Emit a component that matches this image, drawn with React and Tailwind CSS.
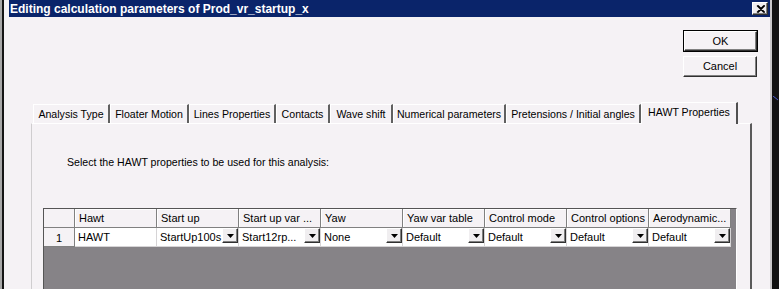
import React from "react";

const tabs = [
  { label: "Analysis Type", w: 77 },
  { label: "Floater Motion", w: 79 },
  { label: "Lines Properties", w: 87 },
  { label: "Contacts", w: 54 },
  { label: "Wave shift", w: 63 },
  { label: "Numerical parameters", w: 113 },
  { label: "Pretensions / Initial angles", w: 135 },
];

const headers = [
  "Hawt",
  "Start up",
  "Start up var ...",
  "Yaw",
  "Yaw var table",
  "Control mode",
  "Control options",
  "Aerodynamic...",
];

const values = [
  { v: "HAWT", dd: false },
  { v: "StartUp100s", dd: true },
  { v: "Start12rp...", dd: true },
  { v: "None", dd: true },
  { v: "Default", dd: true },
  { v: "Default", dd: true },
  { v: "Default", dd: true },
  { v: "Default", dd: true },
];

function DropBtn() {
  return (
    <div className="w-[16px] h-[15px] shrink-0 bg-[#f0eef0] border border-t-white border-l-white border-r-[#303030] border-b-[#303030] shadow-[inset_-1px_-1px_0_#808080] flex items-center justify-center">
      <svg width="7" height="4" viewBox="0 0 7 4">
        <polygon points="0,0 7,0 3.5,4" fill="#000" />
      </svg>
    </div>
  );
}

export default function App() {
  return (
    <div className="w-[779px] h-[289px] flex overflow-hidden bg-black text-[10.6px] leading-[13px] text-black font-['Liberation_Sans',Arial,sans-serif]">
      <div className="w-[2px] bg-[#a8a8a8]" />
      <div className="w-[2px] bg-[#141414]" />
      <div className="w-[766px] flex flex-col bg-[#f5f2f5]">
        {/* title bar */}
        <div className="pl-[5px]">
          <div className="h-[17px] bg-[#0a246a] flex items-center justify-between pl-[1px] pr-[2px]">
            <span className="text-white font-bold text-[12px] leading-[14px] whitespace-nowrap">
              Editing calculation parameters of Prod_vr_startup_x
            </span>
            <div className="w-[16px] h-[13px] bg-[#f0eef0] border border-t-white border-l-white border-r-[#303030] border-b-[#303030] shadow-[inset_-1px_-1px_0_#808080] flex items-center justify-center">
              <svg width="9" height="8" viewBox="0 0 9 8">
                <path d="M1 0.5 L8 7.5 M2 0.5 L9 7.5 M8 0.5 L1 7.5 M9 0.5 L2 7.5" stroke="#000" strokeWidth="1.2" fill="none" />
              </svg>
            </div>
          </div>
        </div>

        {/* buttons */}
        <div className="flex flex-col items-end pr-[12px] pt-[13px] gap-[4px] text-[11px]">
          <div className="w-[75px] h-[22px] border border-black">
            <div className="w-full h-full border border-t-white border-l-white border-r-[#303030] border-b-[#303030] shadow-[inset_-1px_-1px_0_#808080] flex items-center justify-center">
              OK
            </div>
          </div>
          <div className="w-[74px] h-[21px] mr-[1px] border border-t-white border-l-white border-r-[#303030] border-b-[#303030] shadow-[inset_-1px_-1px_0_#808080] flex items-center justify-center">
            Cancel
          </div>
        </div>

        {/* tabs */}
        <div className="ml-[29px] mt-[25px] h-[21px] flex items-end">
          {tabs.map((t) => (
            <div
              key={t.label}
              style={{ width: t.w }}
              className="h-[19px] shrink-0 border-l border-t border-l-white border-t-white border-r-2 border-r-[#606060] flex items-center justify-center whitespace-nowrap"
            >
              {t.label}
            </div>
          ))}
          <div className="w-[97px] h-[22px] -mb-[1px] relative z-10 shrink-0 bg-[#f5f2f5] border-l border-t border-l-white border-t-white border-r-2 border-r-[#505050] flex items-start justify-center pt-[3px] whitespace-nowrap">
            HAWT Properties
          </div>
        </div>

        {/* panel */}
        <div className="ml-[27px] w-[721px] flex-1 flex flex-col border-l border-t border-l-[#cfcdcf] border-t-white border-r-2 border-r-[#5a5a5a]">
          <div className="pl-[35px] pt-[32px] whitespace-nowrap">
            Select the HAWT properties to be used for this analysis:
          </div>
          <div className="ml-[11px] mt-[39px] w-[694px] flex-1 bg-[#868387] border-l border-t border-l-[#555] border-t-[#555] border-r border-r-white flex flex-col text-[11px]">
            {/* header row */}
            <div className="flex h-[19px]">
              <div className="w-[31px] h-full shrink-0 bg-[#f5f2f5] border-r border-b border-[#808080]" />
              {headers.map((h) => (
                <div
                  key={h}
                  className="w-[82px] h-full shrink-0 bg-[#f5f2f5] border-r border-b border-[#808080] shadow-[inset_1px_1px_0_#fff] pl-[4px] flex items-center whitespace-nowrap overflow-hidden"
                >
                  {h}
                </div>
              ))}
            </div>
            {/* data row */}
            <div className="flex h-[19px]">
              <div className="w-[31px] h-full shrink-0 bg-[#f5f2f5] border-r border-b border-[#808080] flex items-center justify-center pt-[2px]">
                1
              </div>
              {values.map((c, i) => (
                <div
                  key={i}
                  className="w-[82px] h-full shrink-0 bg-white border-r border-b border-[#d6d4d6] flex items-start"
                >
                  <div className="flex-1 pl-[3px] pt-[3px] whitespace-nowrap overflow-hidden">{c.v}</div>
                  {c.dd && <DropBtn />}
                </div>
              ))}
            </div>
          </div>
        </div>
      </div>
      <div className="w-[2px] bg-[#c8c6c8]" />
      <div className="w-[7px] bg-[#111] flex flex-col pt-[96px] pl-[1px]">
        <svg width="6" height="5" viewBox="0 0 6 5">
          <path d="M0 0 L5 4" stroke="#4a5ad0" strokeWidth="1" />
        </svg>
      </div>
    </div>
  );
}
